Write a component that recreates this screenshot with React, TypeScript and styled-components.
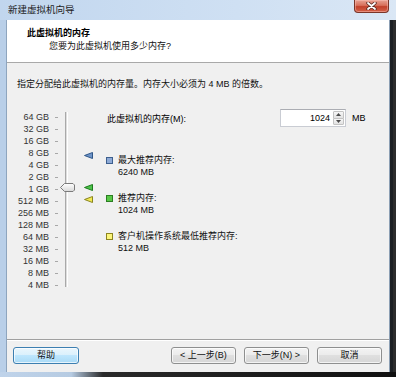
import styled, { createGlobalStyle } from 'styled-components';

const GlobalStyle = createGlobalStyle`
  html, body {
    margin: 0;
    padding: 0;
    background: #161616;
  }
  body {
    font-family: "Liberation Sans", "Noto Sans CJK SC", sans-serif;
    font-size: 9px;
    color: #000;
    overflow: hidden;
  }
  * {
    box-sizing: border-box;
  }
`;

const SCALE = ['64 GB', '32 GB', '16 GB', '8 GB', '4 GB', '2 GB', '1 GB', '512 MB', '256 MB', '128 MB', '64 MB', '32 MB', '16 MB', '8 MB', '4 MB'];
const ROW = 12;

// center of a value on the log scale, relative to the slider box
const posOf = (mb: number) => ROW / 2 + (16 - Math.log2(mb)) * ROW - 2;

const MARKERS = [
  { value: 6240, fill: '#6e94c8', stroke: '#2f5688' },
  { value: 1024, fill: '#4cc24a', stroke: '#1d7a1d' },
  { value: 512, fill: '#f0ea52', stroke: '#8a8420' },
];

const LEGEND = [
  { color: '#8eaad6', border: '#3d5f8e', label: '最大推荐内存:', value: '6240 MB' },
  { color: '#58c846', border: '#2b7d22', label: '推荐内存:', value: '1024 MB' },
  { color: '#fbf57a', border: '#8c8420', label: '客户机操作系统最低推荐内存:', value: '512 MB' },
];

const Marker = ({ fill, stroke }: { fill: string; stroke: string }) => (
  <svg width="9" height="7" viewBox="0 0 9 7">
    <polygon points="0.5,3.5 8.5,0.5 8.5,6.5" fill={fill} stroke={stroke} strokeWidth="1" strokeLinejoin="round" />
  </svg>
);

const App = () => {
  const memory = 1024;

  return (
    <Window>
      <GlobalStyle />
      <TitleBar>
        <TitleText>新建虚拟机向导</TitleText>
        <CloseButton>
          <svg width="11" height="8" viewBox="0 0 11 8">
            <path d="M2 1 L9 7 M9 1 L2 7" stroke="#5a2a22" strokeWidth="3.4" strokeLinecap="round" />
            <path d="M2 1 L9 7 M9 1 L2 7" stroke="#fff" strokeWidth="1.8" strokeLinecap="round" />
          </svg>
        </CloseButton>
      </TitleBar>

      <Middle>
        <LeftFrame />
        <Client>
          <Header>
            <HeaderTitle>此虚拟机的内存</HeaderTitle>
            <HeaderSub>您要为此虚拟机使用多少内存?</HeaderSub>
          </Header>

          <Body>
            <Description>指定分配给此虚拟机的内存量。内存大小必须为 4 MB 的倍数。</Description>

            <Main>
              <SliderBox>
                <ScaleCol>
                  {SCALE.map((s) => (
                    <ScaleRow key={s}>
                      <ScaleLabel>{s}</ScaleLabel>
                      <Tick />
                    </ScaleRow>
                  ))}
                </ScaleCol>
                <Track />
                <Thumb style={{ top: posOf(memory) - 4 }}>
                  <svg width="15" height="9" viewBox="0 0 15 9">
                    <defs>
                      <linearGradient id="tg" x1="0" y1="0" x2="0" y2="1">
                        <stop offset="0" stopColor="#ffffff" />
                        <stop offset="1" stopColor="#d8d8d8" />
                      </linearGradient>
                    </defs>
                    <polygon points="0.5,4.5 4.5,0.5 13,0.5 14.5,2 14.5,7 13,8.5 4.5,8.5" fill="url(#tg)" stroke="#7b7b7b" />
                  </svg>
                </Thumb>
                {MARKERS.map((m) => (
                  <MarkerSlot key={m.value} style={{ top: posOf(m.value) - 3.5 }}>
                    <Marker fill={m.fill} stroke={m.stroke} />
                  </MarkerSlot>
                ))}
              </SliderBox>

              <RightCol>
                <MemoryRow>
                  <span>此虚拟机的内存(M):</span>
                  <SpinBox>
                    <SpinValue>{memory}</SpinValue>
                    <SpinButtons>
                      <SpinButton>
                        <svg width="5" height="3" viewBox="0 0 5 3">
                          <polygon points="2.5,0 5,3 0,3" fill="#4a4a4a" />
                        </svg>
                      </SpinButton>
                      <SpinButton>
                        <svg width="5" height="3" viewBox="0 0 5 3">
                          <polygon points="0,0 5,0 2.5,3" fill="#4a4a4a" />
                        </svg>
                      </SpinButton>
                    </SpinButtons>
                  </SpinBox>
                  <Unit>MB</Unit>
                </MemoryRow>

                <Legend>
                  {LEGEND.map((l) => (
                    <LegendItem key={l.label}>
                      <Swatch $color={l.color} $border={l.border} />
                      <div>
                        <LegendLine>{l.label}</LegendLine>
                        <LegendLine>{l.value}</LegendLine>
                      </div>
                    </LegendItem>
                  ))}
                </Legend>
              </RightCol>
            </Main>
          </Body>

          <Footer>
            <Button $primary>帮助</Button>
            <NavGroup>
              <Button>&lt; 上一步(B)</Button>
              <Button>下一步(N) &gt;</Button>
              <Button>取消</Button>
            </NavGroup>
          </Footer>
        </Client>
        <RightFrame />
      </Middle>
      <BottomFrame />
    </Window>
  );
};

export default App;

const Window = styled.div`
  width: 396px;
  height: 377px;
  display: flex;
  flex-direction: column;
  background: #c3d7ee;
`;

const TitleBar = styled.div`
  height: 20px;
  display: flex;
  align-items: flex-start;
  background: linear-gradient(to right, #c1d6ee 0%, #cfe0f3 60%, #dae7f5 100%);
`;

const TitleText = styled.div`
  padding: 3px 0 0 8px;
  line-height: 13px;
  font-size: 9.5px;
  color: #1e1e1e;
`;

const CloseButton = styled.div`
  margin-left: auto;
  margin-right: 7px;
  width: 35px;
  height: 13px;
  display: flex;
  align-items: center;
  justify-content: center;
  border: 1px solid #7a3528;
  border-top: none;
  border-radius: 0 0 4px 4px;
  background: linear-gradient(#e7a293 0%, #d8705b 45%, #c2412b 55%, #d36148 100%);
  box-shadow: inset 0 0 0 1px rgba(255, 200, 190, 0.45);
`;

const Middle = styled.div`
  flex: 1;
  display: flex;
`;

const LeftFrame = styled.div`
  width: 7px;
  background: linear-gradient(to right, #b9cfe8 0 6px, #8ea5be 6px);
`;

const RightFrame = styled.div`
  width: 7px;
  background: linear-gradient(to right, #8c9fb4 0 1px, #1c1f23 1px 4px, #2c2c2c 4px);
`;

const BottomFrame = styled.div`
  height: 5px;
  background: linear-gradient(to right, #bfd3ea 0%, #b6cbe2 18%, #2a2a2a 26%, #101010 100%);
`;

const Client = styled.div`
  width: 382px;
  display: flex;
  flex-direction: column;
  background: #f0f0f0;
`;

const Header = styled.div`
  height: 43px;
  padding-top: 7px;
  background: #fff;
  border-bottom: 1px solid #a9a9a9;
`;

const HeaderTitle = styled.div`
  padding-left: 20px;
  line-height: 13px;
  font-weight: bold;
`;

const HeaderSub = styled.div`
  padding-left: 42px;
  line-height: 13px;
  color: #111;
`;

const Body = styled.div`
  flex: 1;
  padding: 15px 0 0 10px;
`;

const Description = styled.div`
  line-height: 12px;
  color: #111;
`;

const Main = styled.div`
  display: flex;
  margin-top: 19px;
`;

const SliderBox = styled.div`
  position: relative;
  width: 89px;
  margin-top: 2px;
  display: flex;
  align-items: flex-start;
`;

const ScaleCol = styled.div`
  display: flex;
  flex-direction: column;
`;

const ScaleRow = styled.div`
  height: ${ROW}px;
  display: flex;
  align-items: center;
`;

const ScaleLabel = styled.span`
  width: 32px;
  text-align: right;
  line-height: ${ROW}px;
  color: #333;
`;

const Tick = styled.span`
  width: 3px;
  height: 1px;
  margin-left: 6px;
  background: #a8a8a8;
`;

const Track = styled.div`
  width: 3px;
  height: 175px;
  margin: 1px 0 0 7px;
  border-left: 1px solid #a9a9a9;
  border-right: 1px solid #ffffff;
  background: #dedede;
`;

const Thumb = styled.div`
  position: absolute;
  left: 43px;
  width: 15px;
  height: 9px;
  display: flex;
`;

const MarkerSlot = styled.div`
  position: absolute;
  left: 67px;
  width: 9px;
  height: 7px;
  display: flex;
`;

const RightCol = styled.div`
  flex: 1;
  display: flex;
  flex-direction: column;
`;

const MemoryRow = styled.div`
  display: grid;
  grid-template-columns: 173px 66px auto;
  align-items: center;
  height: 18px;
  padding-left: 1px;
`;

const SpinBox = styled.div`
  height: 18px;
  display: flex;
  background: #fff;
  border: 1px solid #c9ccd3;
  border-top-color: #abadb3;
`;

const SpinValue = styled.div`
  flex: 1;
  text-align: right;
  padding-right: 3px;
  line-height: 16px;
`;

const SpinButtons = styled.div`
  width: 12px;
  display: flex;
  flex-direction: column;
  padding: 1px 1px 1px 0;
`;

const SpinButton = styled.div`
  flex: 1;
  display: flex;
  align-items: center;
  justify-content: center;
  border: 1px solid #c3c3c3;
  border-radius: 1px;
  background: linear-gradient(#f6f6f6, #e2e2e2);
  & + & {
    margin-top: -1px;
  }
`;

const Unit = styled.span`
  margin-left: 6px;
`;

const Legend = styled.div`
  display: flex;
  flex-direction: column;
  gap: 14px;
  margin-top: 27px;
`;

const LegendItem = styled.div`
  display: flex;
  gap: 5px;
`;

const Swatch = styled.span<{ $color: string; $border: string }>`
  width: 7px;
  height: 7px;
  margin-top: 3px;
  background: ${({ $color }) => $color};
  border: 1px solid ${({ $border }) => $border};
`;

const LegendLine = styled.div`
  line-height: 12px;
  color: #111;
`;

const Footer = styled.div`
  display: flex;
  align-items: flex-start;
  height: 33px;
  padding: 7px 7px 0 6px;
  border-top: 1px solid #a0a0a0;
  box-shadow: inset 0 1px 0 #ffffff;
`;

const NavGroup = styled.div`
  margin-left: auto;
  display: flex;
  gap: 8px;
`;

const Button = styled.button<{ $primary?: boolean }>`
  width: ${({ $primary }) => ($primary ? '66px' : '65px')};
  height: 17px;
  padding: 0;
  font-family: "Liberation Sans", "Noto Sans CJK SC", sans-serif;
  font-size: 9px;
  line-height: 15px;
  color: #111;
  border-radius: 3px;
  border: 1px solid ${({ $primary }) => ($primary ? '#3c7fb1' : '#8e8f8f')};
  background: ${({ $primary }) =>
    $primary
      ? 'linear-gradient(#eaf6fd 0%, #d9f0fc 50%, #bee6fd 50%, #a9daf6 100%)'
      : 'linear-gradient(#f3f3f3 0%, #ebebeb 50%, #dfdfdf 50%, #d6d6d6 100%)'};
  box-shadow: inset 0 0 0 1px rgba(255, 255, 255, 0.7);
`;
